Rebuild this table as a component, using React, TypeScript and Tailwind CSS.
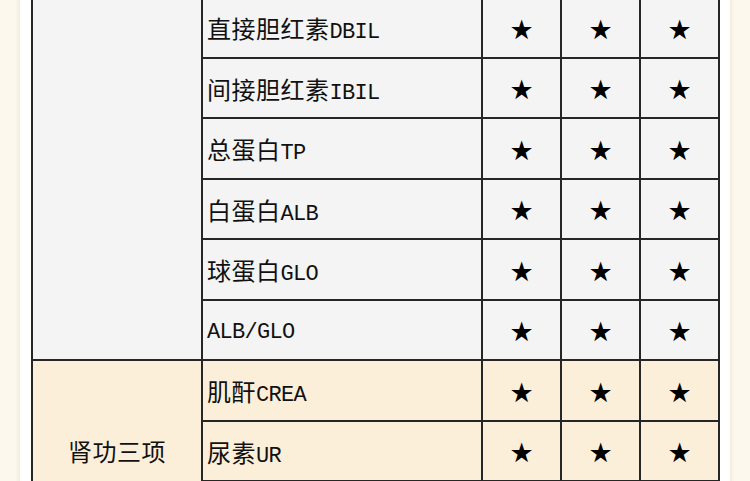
const rows = [
  { cn: "直接胆红素", en: "DBIL" },
  { cn: "间接胆红素", en: "IBIL" },
  { cn: "总蛋白", en: "TP" },
  { cn: "白蛋白", en: "ALB" },
  { cn: "球蛋白", en: "GLO" },
  { cn: "", en: "ALB/GLO" },
];

const kidney = [
  { cn: "肌酐", en: "CREA" },
  { cn: "尿素", en: "UR" },
];

// one test item row: name cell + three star cells
function ItemCells({ cn, en, bg }: { cn: string; en: string; bg: string }) {
  return (
    <>
      <div className={`${bg} flex items-center pl-[4px] pt-[5px] text-[#111]`}>
        <div className="flex items-baseline">
          <span className="text-[24px] leading-none tracking-[0.5px] [font-family:'Noto_Sans_CJK_SC',sans-serif]">
            {cn}
          </span>
          <span className="text-[22px] leading-none tracking-[-0.7px] [font-family:'Liberation_Mono',monospace]">
            {en}
          </span>
        </div>
      </div>
      {[0, 1, 2].map((i) => (
        <div
          key={i}
          className={`${bg} flex items-center justify-center pt-[3px] text-[27px] leading-none text-black [font-family:'DejaVu_Sans',sans-serif]`}
        >
          ★
        </div>
      ))}
    </>
  );
}

export default function App() {
  return (
    <div className="h-[481px] overflow-hidden bg-[#fdf8ed]">
      <div className="ml-[20px] h-[600px] w-[710px] bg-white pl-[11px] shadow-[0_0_5px_rgba(120,100,60,0.18)]">
        <div className="-mt-[4px] grid w-[689px] grid-cols-[168px_278px_77px_77px_77px] grid-rows-[59px_58px_59px_58px_59px_58px_59px_58px_59px] gap-[2px] bg-[#262626] p-[2px]">
          {/* liver function group, title scrolled out above */}
          <div className="col-start-1 row-span-6 row-start-1 bg-[#f4f4f4]" />
          {rows.map((r, i) => (
            <ItemCells key={i} cn={r.cn} en={r.en} bg="bg-[#f4f4f4]" />
          ))}

          {/* kidney function group */}
          <div className="col-start-1 row-span-3 row-start-7 flex items-center justify-center bg-[#fcefd9] text-[24px] leading-none tracking-[0.5px] text-[#111] [font-family:'Noto_Sans_CJK_SC',sans-serif]">
            肾功三项
          </div>
          {kidney.map((r, i) => (
            <ItemCells key={i} cn={r.cn} en={r.en} bg="bg-[#fcefd9]" />
          ))}
          {/* third kidney row lies below the fold */}
          <div className="bg-[#fcefd9]" />
          <div className="bg-[#fcefd9]" />
          <div className="bg-[#fcefd9]" />
          <div className="bg-[#fcefd9]" />
        </div>
      </div>
    </div>
  );
}
